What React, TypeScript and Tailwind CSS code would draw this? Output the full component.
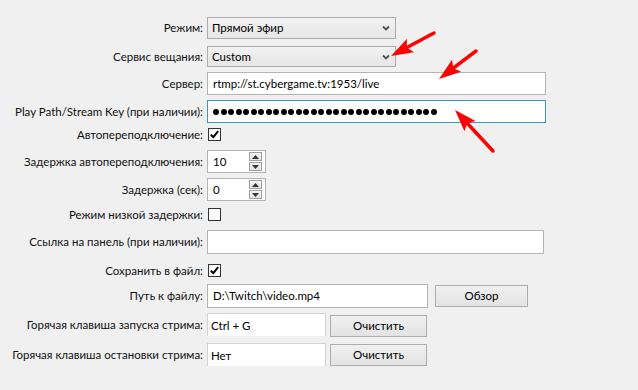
import React from "react";

const font = { fontFamily: "Lato, 'Noto Sans', sans-serif" };

function Label({ children }: { children: React.ReactNode }) {
  return (
    <div className="w-[207px] shrink-0 whitespace-nowrap pr-[4px] text-right text-[11.5px] leading-none text-[#111]">
      {children}
    </div>
  );
}

function Combo({ value }: { value: string }) {
  return (
    <div className="flex h-full w-[189px] items-center justify-between border border-[#acacac] bg-gradient-to-b from-[#f2f2f2] to-[#e6e6e6] pl-[4px] pr-[5px] text-[11.5px] text-black">
      <span>{value}</span>
      <svg width="8" height="6" viewBox="0 0 8 6">
        <path d="M1 1.5 L4 4.5 L7 1.5" fill="none" stroke="#505050" strokeWidth="1.8" />
      </svg>
    </div>
  );
}

function TextBox({
  width,
  children,
  focused,
}: {
  width: string;
  children?: React.ReactNode;
  focused?: boolean;
}) {
  return (
    <div
      className={`flex h-full items-center bg-white pl-[5px] text-[11.5px] text-black ${width} ${
        focused ? "border border-[#3d95c6]" : "border border-[#b4b4b4]"
      }`}
    >
      {children}
    </div>
  );
}

function CheckBox({ checked }: { checked?: boolean }) {
  return (
    <div className="ml-[1px] flex h-[13px] w-[13px] items-center justify-center border border-[#333] bg-white">
      {checked && (
        <svg width="11" height="11" viewBox="0 0 11 11">
          <path d="M1.8 5.6 L4.2 8.2 L9.2 2.2" fill="none" stroke="#000" strokeWidth="2" />
        </svg>
      )}
    </div>
  );
}

function SpinBox({ value }: { value: string }) {
  return (
    <div className="flex h-full w-[59px] items-center justify-between border border-[#b4b4b4] bg-white pl-[5px] pr-[3px] text-[11.5px] text-black">
      <span>{value}</span>
      <div className="flex flex-col gap-[1px]">
        <div className="flex h-[9px] w-[13px] items-center justify-center border border-[#a0a0a0] bg-gradient-to-b from-[#f4f4f4] to-[#e2e2e2]">
          <svg width="7" height="4" viewBox="0 0 7 4">
            <path d="M0 4 L3.5 0 L7 4 Z" fill="#333" />
          </svg>
        </div>
        <div className="flex h-[9px] w-[13px] items-center justify-center border border-[#a0a0a0] bg-gradient-to-b from-[#f4f4f4] to-[#e2e2e2]">
          <svg width="7" height="4" viewBox="0 0 7 4">
            <path d="M0 0 L3.5 4 L7 0 Z" fill="#333" />
          </svg>
        </div>
      </div>
    </div>
  );
}

function Button({ children, width }: { children: React.ReactNode; width: string }) {
  return (
    <div
      className={`flex h-[22px] items-center justify-center border border-[#adadad] bg-gradient-to-b from-[#f0f0f0] to-[#e3e3e3] text-[11.5px] text-black ${width}`}
    >
      {children}
    </div>
  );
}

function HotkeyBox({ value }: { value: string }) {
  return (
    <div className="flex h-full w-[119px] items-start border-l border-t border-r border-[#d4d4d4] bg-white pl-[3px] pt-[3px] text-[11.5px] text-black">
      {value}
    </div>
  );
}

function arrowHead(sx: number, sy: number, tx: number, ty: number) {
  const dx = tx - sx;
  const dy = ty - sy;
  const len = Math.hypot(dx, dy);
  const ux = dx / len;
  const uy = dy / len;
  const L = 22;
  const W = 7.5;
  const bx = tx - ux * L;
  const by = ty - uy * L;
  const nx = -uy;
  const ny = ux;
  const pts = [
    [tx, ty],
    [bx + nx * W, by + ny * W],
    [bx + ux * 4, by + uy * 4],
    [bx - nx * W, by - ny * W],
  ];
  return {
    line: { x1: sx, y1: sy, x2: bx + ux * 4, y2: by + uy * 4 },
    points: pts.map((p) => p.join(",")).join(" "),
  };
}

const arrows = [
  arrowHead(434, 33, 391, 56),
  arrowHead(476, 51, 439, 79),
  arrowHead(493, 151, 455, 110),
];

export default function App() {
  const dots = Array.from({ length: 30 });

  return (
    <main
      className="relative h-[390px] w-[638px] overflow-hidden bg-[#f0f0f0]"
      style={font}
    >
      <div className="flex flex-col">
        <div className="mt-[17px] flex h-[22px] items-center">
          <Label>Режим:</Label>
          <Combo value="Прямой эфир" />
        </div>

        <div className="mt-[7px] flex h-[21px] items-center">
          <Label>Сервис вещания:</Label>
          <Combo value="Custom" />
        </div>

        <div className="mt-[5px] flex h-[23px] items-center">
          <Label>Сервер:</Label>
          <TextBox width="w-[339px]">rtmp://st.cybergame.tv:1953/live</TextBox>
        </div>

        <div className="mt-[5px] flex h-[23px] items-center">
          <Label>Play Path/Stream Key (при наличии):</Label>
          <TextBox width="w-[339px]" focused>
            <div className="flex gap-[1.5px]">
              {dots.map((_, i) => (
                <span key={i} className="h-[6px] w-[6px] rounded-full bg-black" />
              ))}
            </div>
          </TextBox>
        </div>

        <div className="mt-[5px] flex h-[13px] items-center">
          <Label>Автопереподключение:</Label>
          <CheckBox checked />
        </div>

        <div className="mt-[9px] flex h-[23px] items-center">
          <Label>Задержка автопереподключения:</Label>
          <SpinBox value="10" />
        </div>

        <div className="mt-[5px] flex h-[23px] items-center">
          <Label>Задержка (сек):</Label>
          <SpinBox value="0" />
        </div>

        <div className="mt-[7px] flex h-[13px] items-center">
          <Label>Режим низкой задержки:</Label>
          <CheckBox />
        </div>

        <div className="mt-[9px] flex h-[24px] items-center">
          <Label>Ссылка на панель (при наличии):</Label>
          <TextBox width="w-[337px]" />
        </div>

        <div className="mt-[10px] flex h-[13px] items-center">
          <Label>Сохранить в файл:</Label>
          <CheckBox checked />
        </div>

        <div className="mt-[7px] flex h-[24px] items-center">
          <Label>Путь к файлу:</Label>
          <TextBox width="w-[221px]">D:\Twitch\video.mp4</TextBox>
          <div className="ml-[7px]">
            <Button width="w-[93px]">Обзор</Button>
          </div>
        </div>

        <div className="mt-[5px] flex h-[23px] items-center">
          <Label>Горячая клавиша запуска стрима:</Label>
          <HotkeyBox value="Ctrl + G" />
          <div className="ml-[4px] mt-[2px]">
            <Button width="w-[97px]">Очистить</Button>
          </div>
        </div>

        <div className="mt-[7px] flex h-[23px] items-center">
          <Label>Горячая клавиша остановки стрима:</Label>
          <HotkeyBox value="Нет" />
          <div className="ml-[4px]">
            <Button width="w-[97px]">Очистить</Button>
          </div>
        </div>
      </div>

      <svg
        className="pointer-events-none absolute left-0 top-0"
        width="638"
        height="390"
      >
        {arrows.map((a, i) => (
          <g key={i}>
            <line {...a.line} stroke="#ff0000" strokeWidth="3.5" strokeLinecap="round" />
            <polygon points={a.points} fill="#ff0000" />
          </g>
        ))}
      </svg>
    </main>
  );
}
